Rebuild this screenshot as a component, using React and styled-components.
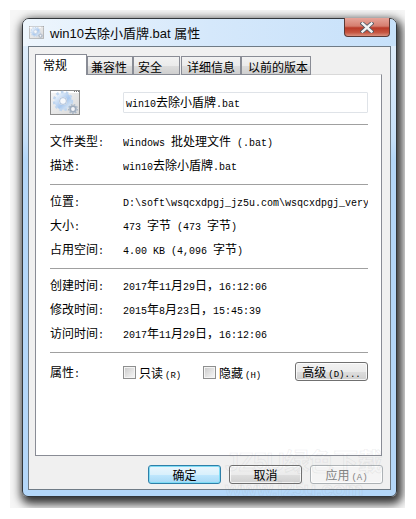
import React from 'react';
import styled, { createGlobalStyle } from 'styled-components';

const GlobalStyle = createGlobalStyle`
    html, body {
        margin: 0;
        padding: 0;
        background: #fff;
    }
    body {
        font-family: "Noto Sans CJK SC", "Liberation Sans", sans-serif;
        font-size: 12px;
        color: #000;
    }
`

const ShadowBox = styled.div`
    position: relative;
    box-sizing: border-box;
    width: 395px;
    height: 498px;
    margin: 10px 0 0 10px;
    padding: 8px 0 0 12px;
    overflow: hidden;
    background: #f6f6f6;
`

const Win = styled.div`
    position: relative;
    box-sizing: border-box;
    width: 375px;
    height: 479px;
    padding: 0 5px 7px 5px;
    border: 1px solid #33373b;
    border-radius: 7px 7px 6px 6px;
    background: linear-gradient(180deg, #e4f0fb 0, #d6e8fa 60px, #c6e0f9 120px, #b4d7f9 140px, #b4d7f9 100%);
    box-shadow: 2px 4px 10px 3px rgba(0, 0, 0, .8);
`

const TitleBar = styled.div`
    display: flex;
    align-items: center;
    gap: 6px;
    height: 27px;
    box-sizing: border-box;
    margin: 0 -5px;
    padding-left: 6px;
    border-radius: 6px 6px 0 0;
    background: linear-gradient(90deg, #eef6fd 0, #d5e8fb 50%, #c7e1fa 100%);
    font-family: "Liberation Sans", "Noto Sans CJK SC", sans-serif;
    font-size: 13px;
    color: #0a0a0a;
`

const CloseButton = styled.div`
    position: absolute;
    top: -1px;
    right: 6px;
    width: 46px;
    height: 19px;
    box-sizing: border-box;
    display: flex;
    align-items: center;
    justify-content: center;
    border: 1px solid #5b3a36;
    border-top: none;
    border-radius: 0 0 4px 4px;
    background: linear-gradient(180deg, #e6a59a 0, #d57e6f 45%, #b93a28 55%, #c65540 80%, #d9907f 100%);
`

const Panel = styled.div`
    box-sizing: border-box;
    height: 444px;
    padding: 7px 7px 0 6px;
    border: 1px solid #6f7b86;
    background: #f0f0f0;
`

const TabRow = styled.div`
    display: flex;
    align-items: flex-end;
    height: 21px;
    margin-bottom: -1px;
    position: relative;
    z-index: 1;
`

const Tab = styled.div`
    box-sizing: border-box;
    width: ${p => p.$w}px;
    height: ${p => (p.$active ? 21 : 19)}px;
    margin-left: ${p => p.$gap || 0}px;
    padding-left: ${p => p.$pad}px;
    border: 1px solid #898c95;
    border-bottom: ${p => (p.$active ? 'none' : '1px solid #898c95')};
    line-height: 19px;
    white-space: nowrap;
    background: ${p => (p.$active ? '#fff' : 'linear-gradient(180deg, #f2f2f2 0, #ebebeb 50%, #dcdcdc 55%, #cfcfcf 100%)')};
`

const Sheet = styled.div`
    box-sizing: border-box;
    width: 347px;
    height: 382px;
    padding: 15px 13px 0 14px;
    border: 1px solid #898c95;
    border-top-color: #d9d9d9;
    background: #fff;
`

const NameRow = styled.div`
    display: grid;
    grid-template-columns: 73px 1fr;
    align-items: center;
    height: 25px;
    margin-bottom: 9px;
`

const NameInput = styled.div`
    box-sizing: border-box;
    height: 21px;
    padding-left: 2px;
    line-height: 17px;
    border: 1px solid #dfe3e8;
    border-radius: 1px;
    white-space: nowrap;
`

const Divider = styled.div`
    height: 1px;
    background: #a0a0a0;
`

const Section = styled.div`
    padding: 5px 0 6px;
`

const Row = styled.div`
    display: grid;
    grid-template-columns: 73px 1fr;
    align-items: center;
    box-sizing: border-box;
    height: 24px;
    padding-bottom: 2px;
    line-height: 22px;
    white-space: nowrap;
`

const Value = styled.div`
    overflow: hidden;
`

const AttrRow = styled.div`
    display: grid;
    grid-template-columns: 73px 80px 92px 73px;
    align-items: center;
    height: 19px;
    margin-top: 9px;
    white-space: nowrap;
`

const CheckLabel = styled.div`
    display: flex;
    align-items: center;
    gap: 3px;
    padding-top: 2px;
`

const CheckBox = styled.span`
    box-sizing: border-box;
    display: block;
    width: 13px;
    height: 13px;
    border: 1px solid #8e8f8f;
    background: linear-gradient(135deg, #c8c8c8 0, #e6e6e6 60%, #f8f8f8 100%);
    box-shadow: inset 0 0 0 1px #f4f4f4;
`

const Footer = styled.div`
    display: flex;
    justify-content: flex-end;
    gap: 8px;
    width: 348px;
    margin-top: 9px;
`

const Button = styled.div`
    box-sizing: border-box;
    display: flex;
    align-items: center;
    justify-content: center;
    width: 73px;
    height: 19px;
    border: 1px solid ${p => (p.$primary ? '#2f7fa8' : p.$disabled ? '#adb2b5' : '#707070')};
    border-radius: 3px;
    color: ${p => (p.$disabled ? '#838383' : '#000')};
    box-shadow: inset 0 0 0 1px ${p => (p.$primary ? '#7fdcf5' : 'rgba(255, 255, 255, .75)')};
    background: ${p => (p.$primary
        ? 'linear-gradient(180deg, #eaf6fd 0, #d9f0fc 50%, #bee6fd 55%, #a7d9f5 100%)'
        : p.$disabled
            ? '#f4f4f4'
            : 'linear-gradient(180deg, #f2f2f2 0, #ebebeb 50%, #dddddd 55%, #cfcfcf 100%)')};
`

const Latin = styled.span`
    font-family: "Liberation Mono", monospace;
    font-size: 10px;
`

const Hint = styled.span`
    margin-left: 2px;
    font-family: "Liberation Mono", monospace;
    font-size: 9px;
`

const Watermark = styled.div`
    position: absolute;
    left: 202px;
    top: 431px;
    width: 170px;
    color: transparent;
    -webkit-text-stroke: 1px rgba(120, 125, 130, .1);
    font-family: "Liberation Sans", "Noto Sans CJK SC", sans-serif;
    font-weight: 700;
    line-height: 1;
    white-space: nowrap;
    pointer-events: none;
    z-index: 2;
`

const WatermarkTop = styled.div`
    font-size: 25px;
    letter-spacing: -.5px;
`

const WatermarkBottom = styled.div`
    margin-top: 3px;
    font-size: 21px;
    letter-spacing: -.5px;
`

// CJK 12px, latin 6px per char, like the old bitmap font
function Mixed({ text }){
    const runs = text.match(/[\u0000-\u00ff]+|[^\u0000-\u00ff]+/g) || [];
    return runs.map((run, i) => (
        /[\u0000-\u00ff]/.test(run[0]) ? <Latin key={i}>{run}</Latin> : <span key={i}>{run}</span>
    ));
}

function GearFile({ width, height }){
    return (
        <svg width={width} height={height} viewBox="0 0 30 25">
            <defs>
                <linearGradient id="gearBg" x1="0" y1="0" x2="1" y2="1">
                    <stop offset="0" stopColor="#f7f7f7"/>
                    <stop offset="1" stopColor="#d8d8d8"/>
                </linearGradient>
                <linearGradient id="gearBlue" x1="0" y1="0" x2="1" y2="1">
                    <stop offset="0" stopColor="#eef5fc"/>
                    <stop offset=".6" stopColor="#a9c8ee"/>
                    <stop offset="1" stopColor="#dbe7f4"/>
                </linearGradient>
            </defs>
            <rect x=".5" y=".5" width="29" height="24" fill="url(#gearBg)" stroke="#8d8d8d"/>
            <rect x="1" y="1" width="28" height="2" fill="#fff"/>
            <path d="M24 1.5h1M26 1.5h1M28 1.5h1" stroke="#777" strokeWidth="1"/>
            <circle cx="13" cy="11" r="6.4" fill="none" stroke="url(#gearBlue)" strokeWidth="4.6"/>
            <circle cx="13" cy="11" r="9" fill="none" stroke="#c0d6ef" strokeWidth="2.4" strokeDasharray="2.6 2.4"/>
            <circle cx="13" cy="11" r="3.4" fill="#f7f9fc" stroke="#93add0" strokeWidth=".7"/>
            <circle cx="23" cy="19" r="2.8" fill="#f4f5f8" stroke="#9fadbe" strokeWidth="1.8"/>
            <circle cx="23" cy="19" r="4.4" fill="none" stroke="#aab9ca" strokeWidth="1.3" strokeDasharray="1.6 1.4"/>
        </svg>
    );
}

const InfoRow = ({ label, value }) => (
    <Row>
        <div><Mixed text={label}/></div>
        <Value><Mixed text={value}/></Value>
    </Row>
);

function App(){
    return (
        <ShadowBox>
            <GlobalStyle/>
            <Win>
                <TitleBar>
                    <GearFile width={15} height={13}/>
                    <span>win10去除小盾牌.bat 属性</span>
                </TitleBar>
                <CloseButton>
                    <svg width="14" height="11" viewBox="0 0 14 11">
                        <path d="M2.5 1.5l9 8M11.5 1.5l-9 8" stroke="#4b5560" strokeWidth="4" strokeLinecap="square"/>
                        <path d="M2.5 1.5l9 8M11.5 1.5l-9 8" stroke="#f3f3f3" strokeWidth="2.4" strokeLinecap="square"/>
                    </svg>
                </CloseButton>
                <Panel>
                    <TabRow>
                        <Tab $active $w={52} $pad={7}>常规</Tab>
                        <Tab $w={46} $pad={3}>兼容性</Tab>
                        <Tab $w={47} $pad={4}>安全</Tab>
                        <Tab $w={60} $gap={1} $pad={5}>详细信息</Tab>
                        <Tab $w={70} $pad={6}>以前的版本</Tab>
                    </TabRow>
                    <Sheet>
                        <NameRow>
                            <GearFile width={30} height={25}/>
                            <NameInput><Mixed text="win10去除小盾牌.bat"/></NameInput>
                        </NameRow>
                        <Divider/>
                        <Section>
                            <InfoRow label="文件类型:" value="Windows 批处理文件 (.bat)"/>
                            <InfoRow label="描述:" value="win10去除小盾牌.bat"/>
                        </Section>
                        <Divider/>
                        <Section>
                            <InfoRow label="位置:" value="D:\soft\wsqcxdpgj_jz5u.com\wsqcxdpgj_very"/>
                            <InfoRow label="大小:" value="473 字节 (473 字节)"/>
                            <InfoRow label="占用空间:" value="4.00 KB (4,096 字节)"/>
                        </Section>
                        <Divider/>
                        <Section>
                            <InfoRow label="创建时间:" value="2017年11月29日，16:12:06"/>
                            <InfoRow label="修改时间:" value="2015年8月23日，15:45:39"/>
                            <InfoRow label="访问时间:" value="2017年11月29日，16:12:06"/>
                        </Section>
                        <Divider/>
                        <AttrRow>
                            <div><Mixed text="属性:"/></div>
                            <CheckLabel><CheckBox/><span>只读<Hint>(R)</Hint></span></CheckLabel>
                            <CheckLabel><CheckBox/><span>隐藏<Hint>(H)</Hint></span></CheckLabel>
                            <Button><span>高级<Hint>(D)...</Hint></span></Button>
                        </AttrRow>
                    </Sheet>
                    <Footer>
                        <Button $primary>确定</Button>
                        <Button>取消</Button>
                        <Button $disabled><span>应用<Hint>(A)</Hint></span></Button>
                    </Footer>
                </Panel>
                <Watermark>
                    <WatermarkTop>JZ5U绿色下载</WatermarkTop>
                    <WatermarkBottom>www.jz5u.com</WatermarkBottom>
                </Watermark>
            </Win>
        </ShadowBox>
    );
};

export default App;
